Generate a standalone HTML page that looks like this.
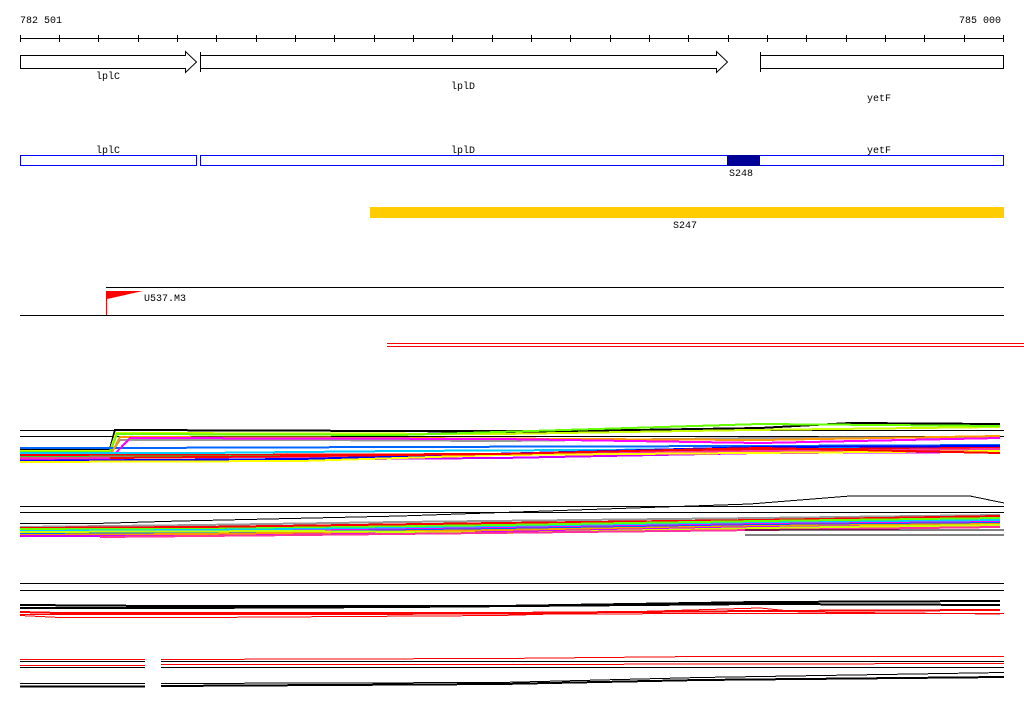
<!DOCTYPE html>
<html><head><meta charset="utf-8"><style>
html,body{margin:0;padding:0;background:#fff;}
svg{display:block}
text{font-family:"Liberation Mono","DejaVu Sans Mono",monospace;font-size:10px;fill:#000}
</style></head><body>
<svg width="1024" height="714" viewBox="0 0 1024 714" xmlns="http://www.w3.org/2000/svg">
<text x="20" y="23">782 501</text>
<text x="959" y="23">785 000</text>
<g stroke="#000" stroke-width="1" shape-rendering="crispEdges">
<line x1="20" y1="38.5" x2="1004" y2="38.5"/>
<path d="M20.5 35v7M59.5 35v7M98.5 35v7M138.5 35v7M177.5 35v7M216.5 35v7M256.5 35v7M295.5 35v7M334.5 35v7M374.5 35v7M413.5 35v7M452.5 35v7M492.5 35v7M531.5 35v7M570.5 35v7M610.5 35v7M649.5 35v7M688.5 35v7M728.5 35v7M767.5 35v7M806.5 35v7M846.5 35v7M885.5 35v7M924.5 35v7M964.5 35v7M1003.5 35v7"/>
</g>
<g fill="#fff" stroke="#000" stroke-width="1">
<path d="M20.5 55.5H185.5V51.5L196.5 62L185.5 72.5V68.5H20.5Z"/>
<path d="M200.5 55.5H716.5V51.5L727.5 62L716.5 72.5V68.5H200.5Z"/>
<path d="M200.5 52V72"/>
<rect x="760.5" y="55.5" width="243" height="13"/>
<path d="M760.5 52V72"/>
</g>
<text x="96" y="79">lplC</text>
<text x="451" y="89">lplD</text>
<text x="867" y="101">yetF</text>
<text x="96" y="153">lplC</text>
<text x="451" y="153">lplD</text>
<text x="867" y="153">yetF</text>
<g fill="none" stroke="#0000ff" stroke-width="1" shape-rendering="crispEdges">
<rect x="20.5" y="155.5" width="176" height="10"/>
<rect x="200.5" y="155.5" width="803" height="10"/>
</g>
<rect x="727" y="155" width="33" height="11" fill="#000099"/>
<text x="729" y="176">S248</text>
<rect x="370" y="207" width="634" height="11" fill="#ffcc00"/>
<text x="673" y="228">S247</text>
<g stroke="#000" shape-rendering="crispEdges">
<line x1="106" y1="287.5" x2="1004" y2="287.5"/>
<line x1="20" y1="315.5" x2="1004" y2="315.5"/>
<line x1="106.5" y1="291" x2="106.5" y2="315" stroke="#f00"/>
</g>
<path d="M107 291H143L107 299Z" fill="#f00"/>
<text x="144" y="301">U537.M3</text>
<g shape-rendering="crispEdges" stroke-width="1">
<line x1="387" y1="343.5" x2="1024" y2="343.5" stroke="#f00"/>
<line x1="387" y1="346.5" x2="1024" y2="346.5" stroke="#f00"/>
</g>
<!-- band 1 -->
<g fill="none" stroke-width="2" shape-rendering="crispEdges">
<polyline stroke="#000" stroke-width="1" points="20,430.5 1004,430.5"/>
<polyline stroke="#000" stroke-width="1" points="20,436.5 1004,436.5"/>
<polyline stroke="#000" points="20,449 110,449 115,430 400,431 510,432 760,428 850,423 1000,424"/>
<polyline stroke="#ccff00" points="20,451 110,451 116,433 500,434 750,430 1000,427"/>
<polyline stroke="#66ff00" points="20,452 110,452 117,434 400,435 760,424 1000,426"/>
<polyline stroke="#0066ff" points="20,448 110,448 118,448 400,447 760,446 1000,445"/>
<polyline stroke="#999999" points="20,454 110,454 120,440 300,440 500,441 760,438 1000,437"/>
<polyline stroke="#ff9900" points="20,456 110,456 120,437 400,438 760,440 1000,436"/>
<polyline stroke="#ff00ff" points="20,459 110,459 130,438 500,439 760,443 1000,438"/>
<polyline stroke="#00ccff" points="20,453 200,453 400,451 760,449 1000,448"/>
<polyline stroke="#ff0000" points="20,455 200,455 500,454 760,450 1000,447"/>
<polyline stroke="#cc00ff" points="20,460 200,460 500,458 760,453 1000,452"/>
<polyline stroke="#33cc33" points="20,457 300,456 760,452 1000,450"/>
<polyline stroke="#ff3399" points="20,458 300,457 760,451 1000,449"/>
<polyline stroke="#0000ff" points="20,461 300,459 760,447 1000,446"/>
<polyline stroke="#ffff00" points="20,462 300,461 500,455 1000,451"/>
<polyline stroke="#ff0000" points="110,458 500,454 760,448 1000,453"/>
</g>
<!-- band 2 -->
<g fill="none" stroke-width="2" shape-rendering="crispEdges">
<polyline stroke="#000" stroke-width="1" points="20,506.5 1004,506.5"/>
<polyline stroke="#000" stroke-width="1" points="20,512.5 1004,512.5"/>
<polyline stroke="#000" stroke-width="1" points="20,523.5 95,523.5 180,521 400,516 750,504 850,496 970,496 1004,503"/>
<polyline stroke="#999999" points="20,527 200,525 400,522 760,518 1000,515"/>
<polyline stroke="#ff0000" points="20,528 200,527 500,523 760,520 1000,516"/>
<polyline stroke="#66ff00" points="20,529 200,529 500,525 760,521 1000,518"/>
<polyline stroke="#00ccff" points="20,531 200,530 500,527 760,523 1000,520"/>
<polyline stroke="#ff00ff" points="20,533 200,532 500,528 760,524 1000,522"/>
<polyline stroke="#0066ff" points="20,534 200,533 500,529 760,525 1000,523"/>
<polyline stroke="#ff9900" points="20,535 200,534 500,530 760,526 1000,524"/>
<polyline stroke="#cc00ff" points="20,536 200,536 500,532 760,527 1000,526"/>
<polyline stroke="#ccff00" points="20,532 300,531 500,533 760,528 1000,525"/>
<polyline stroke="#ff3399" points="100,537 300,535 760,530 1000,527"/>
<polyline stroke="#000" stroke-width="1" points="745,530 1004,530"/>
<polyline stroke="#000" stroke-width="1" points="745,535 1004,535"/>
</g>
<!-- band 3 -->
<g fill="none" stroke-width="1" shape-rendering="crispEdges">
<line x1="20" y1="583.5" x2="1004" y2="583.5" stroke="#000"/>
<line x1="20" y1="590.5" x2="1004" y2="590.5" stroke="#000"/>
<polyline stroke="#000" stroke-width="2" points="20,605 160,606 500,606 760,602 1000,601"/>
<polyline stroke="#000" stroke-width="2" points="20,608 180,608 400,607 760,604 1000,605"/>
<polyline stroke="#f00" stroke-width="2" points="20,612 60,613 200,613 500,613 760,611 1000,610"/>
<polyline stroke="#f00" points="20,615.5 60,617.5 200,617.5 500,615.5 760,608 800,612 1000,614"/>
<polyline stroke="#f00" points="20,614.5 300,614.5 760,613.5 1004,613.5"/>
</g>
<!-- band 4 -->
<g fill="none" stroke-width="1" shape-rendering="crispEdges">
<polyline stroke="#f00" points="20,659.5 145,659.5"/>
<polyline stroke="#f00" points="161,659.5 500,658.5 700,656.5 1004,656.5"/>
<line x1="20" y1="661.5" x2="145" y2="661.5" stroke="#000"/>
<line x1="161" y1="661.5" x2="1004" y2="661.5" stroke="#000"/>
<polyline stroke="#f00" points="20,665.5 145,665.5"/>
<polyline stroke="#f00" points="161,664.5 500,664.5 1004,663.5"/>
<line x1="20" y1="667.5" x2="145" y2="667.5" stroke="#000"/>
<line x1="161" y1="667.5" x2="1004" y2="667.5" stroke="#000"/>
<line x1="20" y1="683.5" x2="145" y2="683.5" stroke="#000"/>
<polyline stroke="#000" points="161,683.5 500,682.5 700,677.5 1004,672.5"/>
<line x1="20" y1="686.5" x2="145" y2="686.5" stroke="#000" stroke-width="2"/>
<polyline stroke="#000" stroke-width="2" points="161,686 500,684 700,680 1004,677"/>
</g>
</svg>
</body></html>
